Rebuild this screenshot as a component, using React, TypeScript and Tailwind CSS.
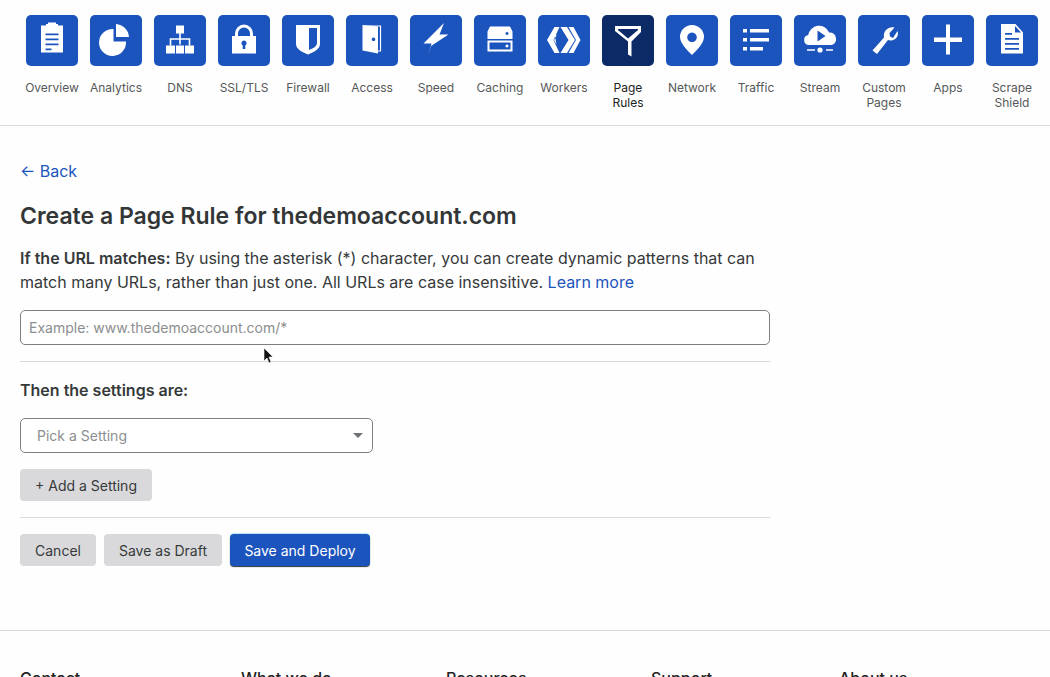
import type { ReactNode } from "react";

const W = "#ffffff";

const icons: Record<string, ReactNode> = {
  Overview: (
    <>
      <path fill={W} fillRule="evenodd" d="M15 11h5v-1.500h2v-1.500h8v1.500h2v1.500h5v27h-22zM19.500 19v1.800h13v-1.800zM19.500 24v1.800h13v-1.800zM19.500 29v1.800h13v-1.800zM19.500 34v1.800h6v-1.800z" transform="translate(0 -0.500)" />
    </>
  ),
  Analytics: (
    <>
      <path fill={W} d="M23.500 13v12.500h12.500a13.500 13.500 0 1 1-12.500-12.500z" transform="translate(0 1)" />
      <path fill={W} d="M25 10a14 14 0 0 1 13 13h-13z" transform="translate(1 -1)" />
      <path fill={W} d="M29 11a13 13 0 0 1 9 13.500 13 13 0 0 1-25 4z" opacity="0" />
    </>
  ),
  DNS: (
    <>
      <path fill={W} d="M22 11h8v8h-8zM12 31h9v8h-9zM22 31h8v8h-8zM31 31h9v8h-9z" transform="translate(0 -0.500)" />
      <path stroke={W} strokeWidth="1.600" fill="none" d="M26 18v12M16.500 31v-6.500h19v6.500" transform="translate(0 -0.500)" />
    </>
  ),
  "SSL/TLS": (
    <>
      <path fill="none" stroke={W} strokeWidth="3" d="M18.500 24v-5.500a7.500 7.500 0 0 1 15 0v5.500" />
      <path fill={W} fillRule="evenodd" d="M14 21h24v17.500h-24zM26 25.500a2.700 2.700 0 0 0-1.300 5v3.500h2.600v-3.500a2.700 2.700 0 0 0-1.300-5z" />
    </>
  ),
  Firewall: (
    <path fill={W} fillRule="evenodd" d="M14 10h24v19c0 5-6 8-12 10.500c-6-2.500-12-5.500-12-10.500zM27 13v22c4-1.800 8-3.500 8-7v-15z" />
  ),
  Access: (
    <>
      <path fill="none" stroke={W} strokeWidth="1.200" d="M18 11h16.500v25h-3" />
      <path fill={W} fillRule="evenodd" d="M15.500 11l15.500 1.500v27l-15.500-3zM26.500 23.500a1.800 1.800 0 1 0 0.010 0z" transform="translate(1 -1)" />
    </>
  ),
  Speed: <path fill={W} d="M34 8l-4.500 11.500h9l-17.500 11.500-3 9 3.500-11.500h-8z M21 31l-2 9 z" />,
  Caching: (
    <>
      <path fill={W} fillRule="evenodd" d="M16 11.500h20l2.500 5v7.500h-25v-7.500zM33 17a1.500 1.500 0 1 0 .010 0z" />
      <path fill={W} fillRule="evenodd" d="M13.500 25.500h25v11h-25zM15.500 27.500v7h21v-7zM33 29.500a1.500 1.500 0 1 0 .010 0z" />
    </>
  ),
  Workers: (
    <path fill={W} d="M18 12h5l-6 13 6 13h-5l-7.500-13zM24 12h6.500l8 13-8 13h-6.500l8-13zM32 12h5l7 13-7 13h-5l7.500-13z M17.500 16l2.500 4.500-2.500 4.500 2.500 4.500" transform="translate(-1.500 0)" />
  ),
  "Page Rules": <path fill={W} d="M14 11h26v6l-9.500 9.500v15l-3.500-2v-13l-13-10.500zM17 14v1l10 8.500 10-8.500v-1z" fillRule="evenodd" transform="translate(-1 0)" />,
  Network: (
    <path fill={W} fillRule="evenodd" d="M26 11a12 12 0 0 1 12 12c0 6-7 13-12 18-5-5-12-12-12-18a12 12 0 0 1 12-12zM26 18.500a4.800 4.800 0 1 0 .010 0z" transform="translate(0 -1)" />
  ),
  Traffic: <path fill={W} d="M13 13h4v3.500h-4zM20 13h19v3.500h-19zM13 22h4v3.500h-4zM20 22h19v3.500h-19zM13 31h4v3.500h-4zM20 31h13v3.500h-13z" transform="translate(0 1)" />,
  Stream: (
    <>
      <path fill={W} fillRule="evenodd" d="M15 30a5 5 0 0 1-.800-9.900 11 11 0 0 1 21-2.600 6.500 6.500 0 0 1 2.800 12.500zM23.500 15.500v11l8-5.500z" transform="translate(0 0)" />
      <circle cx="29" cy="35.500" r="2.600" fill={W} transform="translate(-3 -0.500)" />
      <path stroke={W} strokeWidth="1.400" d="M13 35h8M32 35h7" />
    </>
  ),
  "Custom Pages": (
    <path fill={W} d="M40 16c1.500 4-1 9-6 9.500-1.500 0-2.500-.300-3.500-.500l-11 14-4.500-3.500 11.500-13c-.500-2 0-5.500 2-7.500 2-2 5-3.500 8.500-2.500l-5 5.500.500 3.500 3 1.500z" transform="translate(-0.500 0)" />
  ),
  Apps: <path fill={W} d="M24 10h4v13h12v4.500h-12v12.500h-4v-12.500h-12v-4.500h12z" transform="translate(0 -0.500)" />,
  "Scrape Shield": (
    <path fill={W} fillRule="evenodd" d="M15 9h14.500l7.500 8.500v21h-22zM29 11v6.500h6zM19 18v1.800h7v-1.800zM19 23v1.800h14v-1.800zM19 28v1.800h14v-1.800zM19 33v1.800h14v-1.800z" />
  ),
};

const navItems = [
  "Overview", "Analytics", "DNS", "SSL/TLS", "Firewall", "Access", "Speed", "Caching",
  "Workers", "Page Rules", "Network", "Traffic", "Stream", "Custom Pages", "Apps", "Scrape Shield",
];

const footerColumns = [
  { title: "Contact", className: "w-[221px]" },
  { title: "What we do", className: "w-[205px]" },
  { title: "Resources", className: "w-[205px]" },
  { title: "Support", className: "w-[188px]" },
  { title: "About us", className: "" },
];

export default function App() {
  return (
    <div className="relative h-[677px] overflow-hidden bg-[#fefefe] font-['Inter',sans-serif] text-[#36393a]">
      <nav className="flex h-[126px] items-start border-b border-[#d9d9de] pl-[20px] pt-[15px]">
        {navItems.map((name) => (
          <div key={name} className="flex w-[64px] shrink-0 flex-col items-center">
            <div className={`h-[51px] w-[52px] rounded-[5px] ${name === "Page Rules" ? "bg-[#0c2a66]" : "bg-[#1c54bd]"}`}>
              <svg viewBox="0 0 52 51" className="h-[51px] w-[52px]">
                {icons[name]}
              </svg>
            </div>
            <span className={`mt-[14px] w-[60px] text-center text-[12px] leading-[15px] whitespace-pre-line ${name === "Page Rules" ? "whitespace-nowrap text-[#222]" : "text-[#555859]"}`}>
              {name === "Custom Pages" ? "Custom\nPages" : name === "Scrape Shield" ? "Scrape\nShield" : name}
            </span>
          </div>
        ))}
      </nav>

      <main className="w-[770px] pl-[20px] pt-[33px]">
        <a className="block text-[16px] leading-[24px] text-[#1c54bd]">← Back</a>
        <h1 className="mt-[18px] text-[23px] leading-[30px] font-semibold text-[#333637]">
          Create a Page Rule for thedemoaccount.com
        </h1>
        <p className="mt-[15px] text-[16px] leading-[24px]">
          <strong className="font-semibold">If the URL matches:</strong> By using the asterisk (*) character, you can create dynamic patterns that can
          match many URLs, rather than just one. All URLs are case insensitive.{" "}
          <a className="text-[#1c54bd]">Learn more</a>
        </p>
        <div className="mt-[16px] flex h-[35px] items-center rounded-[5px] border border-[#7d8083] bg-white pl-[8px] text-[14px] text-[#8b8e90]">
          Example: www.thedemoaccount.com/*
        </div>
        <div className="mt-[16px] border-t border-[#d9d9de]" />
        <h2 className="mt-[16px] text-[16px] leading-[24px] font-semibold">Then the settings are:</h2>
        <div className="mt-[16px] flex h-[35px] w-[353px] items-center justify-between rounded-[5px] border border-[#7d8083] bg-white pl-[16px] pr-[9px] text-[14px] text-[#8b8e90]">
          Pick a Setting
          <span className="h-0 w-0 border-x-[5px] border-t-[5px] border-x-transparent border-t-[#6f7274]" />
        </div>
        <button className="mt-[16px] block h-[32px] w-[132px] rounded-[4px] bg-[#d9d9db] text-[14px] text-[#36393a]">
          + Add a Setting
        </button>
        <div className="mt-[16px] border-t border-[#d9d9de]" />
        <div className="mt-[16px] flex gap-[8px]">
          <button className="h-[32px] w-[76px] rounded-[4px] bg-[#d9d9db] text-[14px]">Cancel</button>
          <button className="h-[32px] w-[118px] rounded-[4px] bg-[#d9d9db] text-[14px]">Save as Draft</button>
          <button className="h-[32px] w-[140px] rounded-[4px] bg-[#1c54bd] text-[14px] text-white shadow-[0_-1px_1px_#b5e4f5,0_1px_1px_#30343a]">
            Save and Deploy
          </button>
        </div>
      </main>

      <footer className="mt-[64px] flex border-t border-[#d9d9de] pl-[20px] pt-[35px]">
        {footerColumns.map((col) => (
          <h3 key={col.title} className={`${col.className} text-[16px] leading-[24px] font-medium text-[#222]`}>
            {col.title}
          </h3>
        ))}
      </footer>

      {/* mouse pointer caught in the screenshot */}
      <svg viewBox="0 0 12 18" className="absolute left-[263px] top-[347px] h-[18px] w-[12px]">
        <path d="M1 1v13l3-3 2 5 2-1-2-5h4z" fill="#111" stroke="#fff" strokeWidth="0.600" />
      </svg>
    </div>
  );
}
